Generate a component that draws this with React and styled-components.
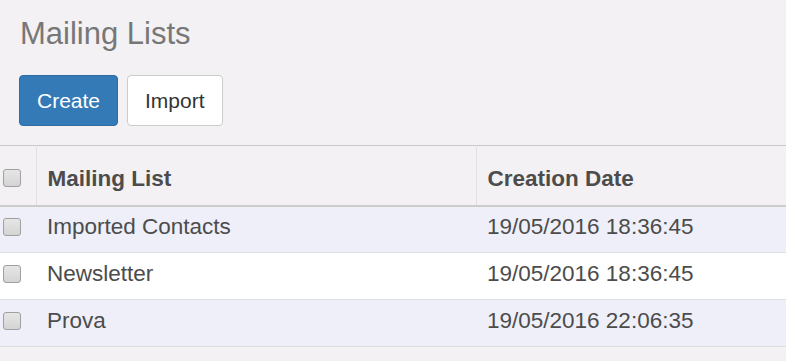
import React from 'react'
import styled, { createGlobalStyle } from 'styled-components'

const Global = createGlobalStyle`
  body {
    margin: 0;
    background: #f3f1f3;
    font-family: "Liberation Sans", Arial, sans-serif;
  }
`

const rows = [
  { name: 'Imported Contacts', date: '19/05/2016 18:36:45' },
  { name: 'Newsletter', date: '19/05/2016 18:36:45' },
  { name: 'Prova', date: '19/05/2016 22:06:35' },
]

function App() {
  return (
    <>
      <Global />
      <Page>
        <Header>
          <Title>Mailing Lists</Title>
          <Toolbar>
            <Button primary>Create</Button>
            <Button>Import</Button>
          </Toolbar>
        </Header>
        <Table>
          <colgroup>
            <col style={{ width: 36 }} />
            <col style={{ width: 440 }} />
            <col />
          </colgroup>
          <thead>
            <tr>
              <CheckCell head><Check /></CheckCell>
              <Th>Mailing List</Th>
              <Th>Creation Date</Th>
            </tr>
          </thead>
          <tbody>
            {rows.map((r, i) => (
              <Row key={r.name} odd={i % 2 === 0}>
                <CheckCell><Check /></CheckCell>
                <Td>{r.name}</Td>
                <Td>{r.date}</Td>
              </Row>
            ))}
          </tbody>
        </Table>
      </Page>
    </>
  )
}

export default App

const Page = styled.div`
  width: 786px;
  height: 361px;
  overflow: hidden;
`

const Header = styled.div`
  padding: 15px 19px 19px;
`

const Title = styled.h1`
  margin: 0 0 0 1px;
  font-size: 31px;
  font-weight: normal;
  line-height: 38px;
  color: #777777;
`

const Toolbar = styled.div`
  display: flex;
  gap: 9px;
  margin-top: 22px;
`

const Button = styled.button`
  font-family: inherit;
  font-size: 21px;
  height: 51px;
  padding: 0 17px;
  border-radius: 4px;
  border: 1px solid ${p => (p.primary ? '#2e6da4' : '#cccccc')};
  background: ${p => (p.primary ? '#337ab7' : '#ffffff')};
  color: ${p => (p.primary ? '#ffffff' : '#333333')};
`

const Table = styled.table`
  width: 100%;
  table-layout: fixed;
  border-collapse: collapse;
  border-top: 1px solid #c8c6c8;
  font-size: 22.5px;
  color: #4c4c4c;
`

const Th = styled.th`
  box-sizing: border-box;
  height: 60px;
  text-align: left;
  font-weight: bold;
  padding: 8px 11px 0;
  border-left: 1px solid #e2e0e2;
  border-bottom: 2px solid #cccccc;
`

const Row = styled.tr`
  background: ${p => (p.odd ? '#eeeff8' : '#ffffff')};
  border-bottom: 1px solid #dddddd;
`

const Td = styled.td`
  box-sizing: border-box;
  height: 47px;
  padding: 0 11px 5px;
  white-space: nowrap;
`

const CheckCell = styled.td`
  box-sizing: border-box;
  padding: ${p => (p.head ? '6px 0 0 3px' : '0 0 5px 3px')};
  ${p => p.head && 'border-bottom: 2px solid #cccccc;'}
`

const Check = styled.span`
  display: block;
  width: 16px;
  height: 16px;
  border: 1px solid #a0a0a0;
  border-radius: 3px;
  background: linear-gradient(#e6e6e6, #d4d4d4);
`
